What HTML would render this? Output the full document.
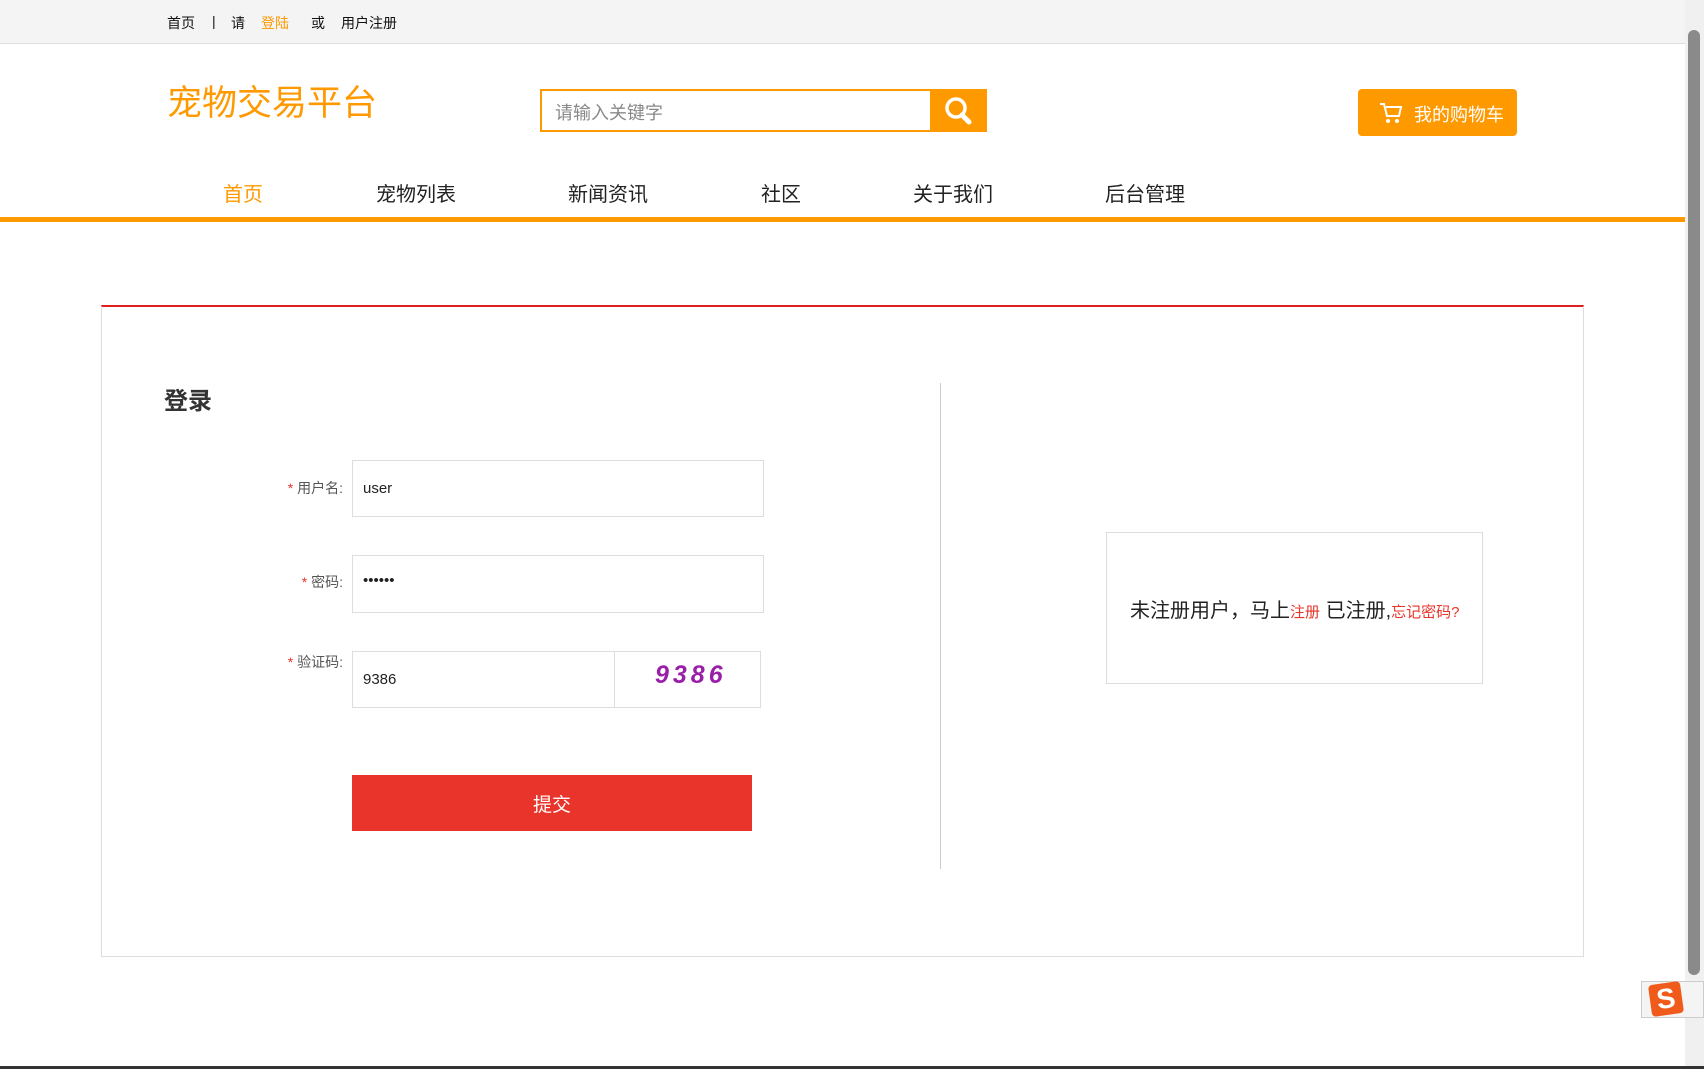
<!DOCTYPE html>
<html><head><meta charset="utf-8"><style>
*{margin:0;padding:0;box-sizing:border-box}
body{width:1704px;height:1069px;position:relative;overflow:hidden;background:#fff;font-family:"Liberation Sans","Noto Sans CJK SC",sans-serif;color:#222}
.a{position:absolute;white-space:nowrap}
</style></head><body>
<div class="a" style="left:0;top:0;width:1685px;height:44px;background:#f4f4f4;border-bottom:1px solid #ddd"></div>
<div class="a" style="left:167px;top:13px;font-size:14px;color:#111">首页</div>
<div class="a" style="left:212px;top:13px;font-size:14px;color:#111">|</div>
<div class="a" style="left:231px;top:13px;font-size:14px;color:#111">请</div>
<div class="a" style="left:261px;top:13px;font-size:14px;color:#f90">登陆</div>
<div class="a" style="left:311px;top:13px;font-size:14px;color:#111">或</div>
<div class="a" style="left:341px;top:13px;font-size:14px;color:#111">用户注册</div>
<div class="a" style="left:167px;top:75px;font-size:35px;color:#f90">宠物交易平台</div>
<div class="a" style="left:540px;top:89px;width:392px;height:43px;border:2px solid #f90;background:#fff"></div>
<div class="a" style="left:555px;top:99px;font-size:18px;color:#888">请输入关键字</div>
<div class="a" style="left:931px;top:89px;width:56px;height:43px;background:#f90">
<svg width="56" height="43" viewBox="0 0 56 43"><circle cx="25" cy="19" r="9" fill="none" stroke="#fff" stroke-width="3.5"/><line x1="31" y1="26" x2="38" y2="33" stroke="#fff" stroke-width="5" stroke-linecap="round"/></svg></div>
<div class="a" style="left:1358px;top:89px;width:159px;height:47px;background:#f90;border-radius:4px"></div>
<svg class="a" style="left:1378px;top:100px" width="26" height="26" viewBox="0 0 26 26"><path d="M2 4h4l3 12h12l2-9H8" fill="none" stroke="#fff" stroke-width="2"/><circle cx="10" cy="21" r="2" fill="#fff"/><circle cx="19" cy="21" r="2" fill="#fff"/></svg>
<div class="a" style="left:1414px;top:101px;font-size:18px;color:#fff">我的购物车</div>
<div class="a" style="left:223px;top:178px;font-size:20px;color:#f90">首页</div>
<div class="a" style="left:376px;top:178px;font-size:20px">宠物列表</div>
<div class="a" style="left:568px;top:178px;font-size:20px">新闻资讯</div>
<div class="a" style="left:761px;top:178px;font-size:20px">社区</div>
<div class="a" style="left:913px;top:178px;font-size:20px">关于我们</div>
<div class="a" style="left:1105px;top:178px;font-size:20px">后台管理</div>
<div class="a" style="left:0;top:217px;width:1685px;height:5px;background:#f90"></div>
<div class="a" style="left:101px;top:305px;width:1483px;height:652px;border:1px solid #ddd;border-top:2px solid #e02020"></div>
<div class="a" style="left:164px;top:381px;font-size:24px;font-weight:bold;color:#333">登录</div>
<div class="a" style="left:280px;top:478px;width:63px;text-align:right;font-size:14px;color:#555"><span style="color:#e8342a">*</span> 用户名:</div>
<div class="a" style="left:352px;top:460px;width:412px;height:57px;border:1px solid #ddd"></div>
<div class="a" style="left:363px;top:480px;font-size:15px">user</div>
<div class="a" style="left:280px;top:572px;width:63px;text-align:right;font-size:14px;color:#555"><span style="color:#e8342a">*</span> 密码:</div>
<div class="a" style="left:352px;top:555px;width:412px;height:58px;border:1px solid #ddd"></div>
<div class="a" style="left:363px;top:572px;font-size:15px">••••••</div>
<div class="a" style="left:280px;top:652px;width:63px;text-align:right;font-size:14px;color:#555"><span style="color:#e8342a">*</span> 验证码:</div>
<div class="a" style="left:352px;top:651px;width:263px;height:57px;border:1px solid #ddd"></div>
<div class="a" style="left:363px;top:671px;font-size:15px">9386</div>
<div class="a" style="left:614px;top:651px;width:147px;height:57px;border:1px solid #ddd"></div>
<div class="a" style="left:655px;top:661px;font-size:25px;font-weight:bold;font-style:italic;color:#9a1fa8;letter-spacing:4px">9386</div>
<div class="a" style="left:352px;top:775px;width:400px;height:56px;background:#e8342a;color:#fff;font-size:19px;text-align:center;line-height:62px">提交</div>
<div class="a" style="left:940px;top:383px;width:1px;height:486px;background:#ccc"></div>
<div class="a" style="left:1106px;top:532px;width:377px;height:152px;border:1px solid #ddd"></div>
<div class="a" style="left:1130px;top:594px;font-size:20px;color:#222">未注册用户，马上<span style="color:#e8342a;font-size:15px">注册</span> 已注册,<span style="color:#e8342a;font-size:15px">忘记密码?</span></div>
<div class="a" style="left:1685px;top:0;width:19px;height:1069px;background:#f0f0f0"></div>
<div class="a" style="left:1688px;top:30px;width:12px;height:945px;background:#8a8a8a;border-radius:6px"></div>
<div class="a" style="left:1641px;top:981px;width:63px;height:37px;background:#f4f4f4;border:1px solid #ccc"></div>
<div class="a" style="left:1650px;top:983px;width:32px;height:32px;background:#f05a1a;border-radius:4px;transform:rotate(-8deg);color:#fff;font-weight:bold;font-size:28px;text-align:center;line-height:32px">S</div>
<div class="a" style="left:0;top:1066px;width:1704px;height:3px;background:#333"></div>
</body></html>
